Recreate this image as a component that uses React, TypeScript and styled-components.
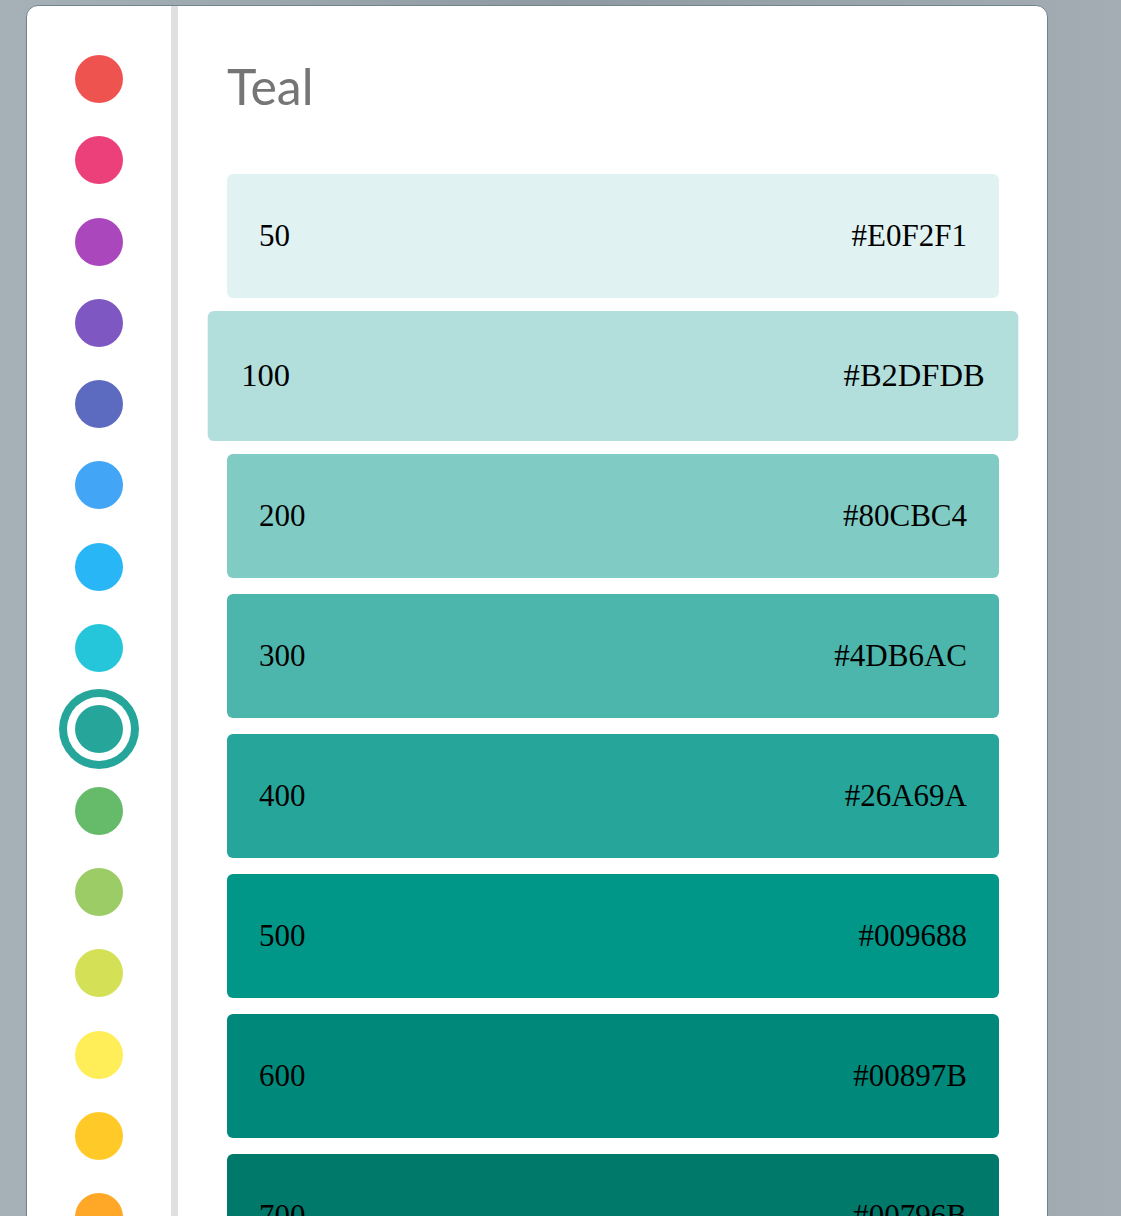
import React from "react";
import styled, { createGlobalStyle } from "styled-components";

const GlobalStyle = createGlobalStyle`
  html, body {
    margin: 0;
    padding: 0;
    height: 100%;
    overflow: hidden;
  }
  body {
    background: linear-gradient(90deg, #a6b1b7 0%, #8f9ba2 50%, #a3adb3 100%);
    font-family: "Open Sans", "Liberation Sans", sans-serif;
  }
`;

const Page = styled.div`
  padding: 5px 0 0 26px;
`;

const Card = styled.div`
  width: 1022px;
  box-sizing: border-box;
  height: 1400px;
  background: #ffffff;
  border: 1px solid #71838c;
  border-radius: 12px;
  display: flex;
  overflow: hidden;
`;

const Sidebar = styled.nav`
  width: 144px;
  flex: none;
  border-right: 7px solid #e0e0e0;
  display: flex;
  flex-direction: column;
  align-items: center;
  gap: 33.3px;
  padding-top: 49px;
`;

const Dot = styled.button<{ $color: string; $active?: boolean }>`
  width: 48px;
  height: 48px;
  flex: none;
  border: none;
  padding: 0;
  border-radius: 50%;
  background: ${(p) => p.$color};
  box-shadow: ${(p) =>
    p.$active ? `0 0 0 8px #ffffff, 0 0 0 16px ${p.$color}` : "none"};
  cursor: pointer;
`;

const Main = styled.main`
  flex: 1;
  padding: 0 48px 0 49px;
  display: flex;
  flex-direction: column;
`;

const Title = styled.h1`
  margin: 50px 0 0 0;
  font-family: "Lato", "Open Sans", sans-serif;
  font-weight: 400;
  font-size: 50px;
  line-height: 60px;
  color: #757575;
`;

const SwatchList = styled.div`
  margin-top: 58px;
  display: flex;
  flex-direction: column;
  gap: 16px;
`;

const Swatch = styled.div<{ $bg: string; $hover?: boolean }>`
  height: 124px;
  flex: none;
  box-sizing: border-box;
  border-radius: 6px;
  background: ${(p) => p.$bg};
  display: flex;
  align-items: center;
  justify-content: space-between;
  padding: 0 32px;
  font-family: "Liberation Serif", "Times New Roman", serif;
  font-size: 31px;
  color: #000000;
  transform: ${(p) => (p.$hover ? "scale(1.05)" : "none")};
`;

const dots = [
  "#EF5350",
  "#EC407A",
  "#AB47BC",
  "#7E57C2",
  "#5C6BC0",
  "#42A5F5",
  "#29B6F6",
  "#26C6DA",
  "#26A69A",
  "#66BB6A",
  "#9CCC65",
  "#D4E157",
  "#FFEE58",
  "#FFCA28",
  "#FFA726",
  "#FF7043",
];

const shades: [string, string][] = [
  ["50", "#E0F2F1"],
  ["100", "#B2DFDB"],
  ["200", "#80CBC4"],
  ["300", "#4DB6AC"],
  ["400", "#26A69A"],
  ["500", "#009688"],
  ["600", "#00897B"],
  ["700", "#00796B"],
  ["800", "#00695C"],
];

export default function App() {
  return (
    <>
      <GlobalStyle />
      <Page>
        <Card>
          <Sidebar>
            {dots.map((c, i) => (
              <Dot key={c} $color={c} $active={i === 8} aria-label={c} />
            ))}
          </Sidebar>
          <Main>
            <Title>Teal</Title>
            <SwatchList>
              {shades.map(([name, hex]) => (
                <Swatch key={name} $bg={hex} $hover={name === "100"}>
                  <span>{name}</span>
                  <span>{hex}</span>
                </Swatch>
              ))}
            </SwatchList>
          </Main>
        </Card>
      </Page>
    </>
  );
}
